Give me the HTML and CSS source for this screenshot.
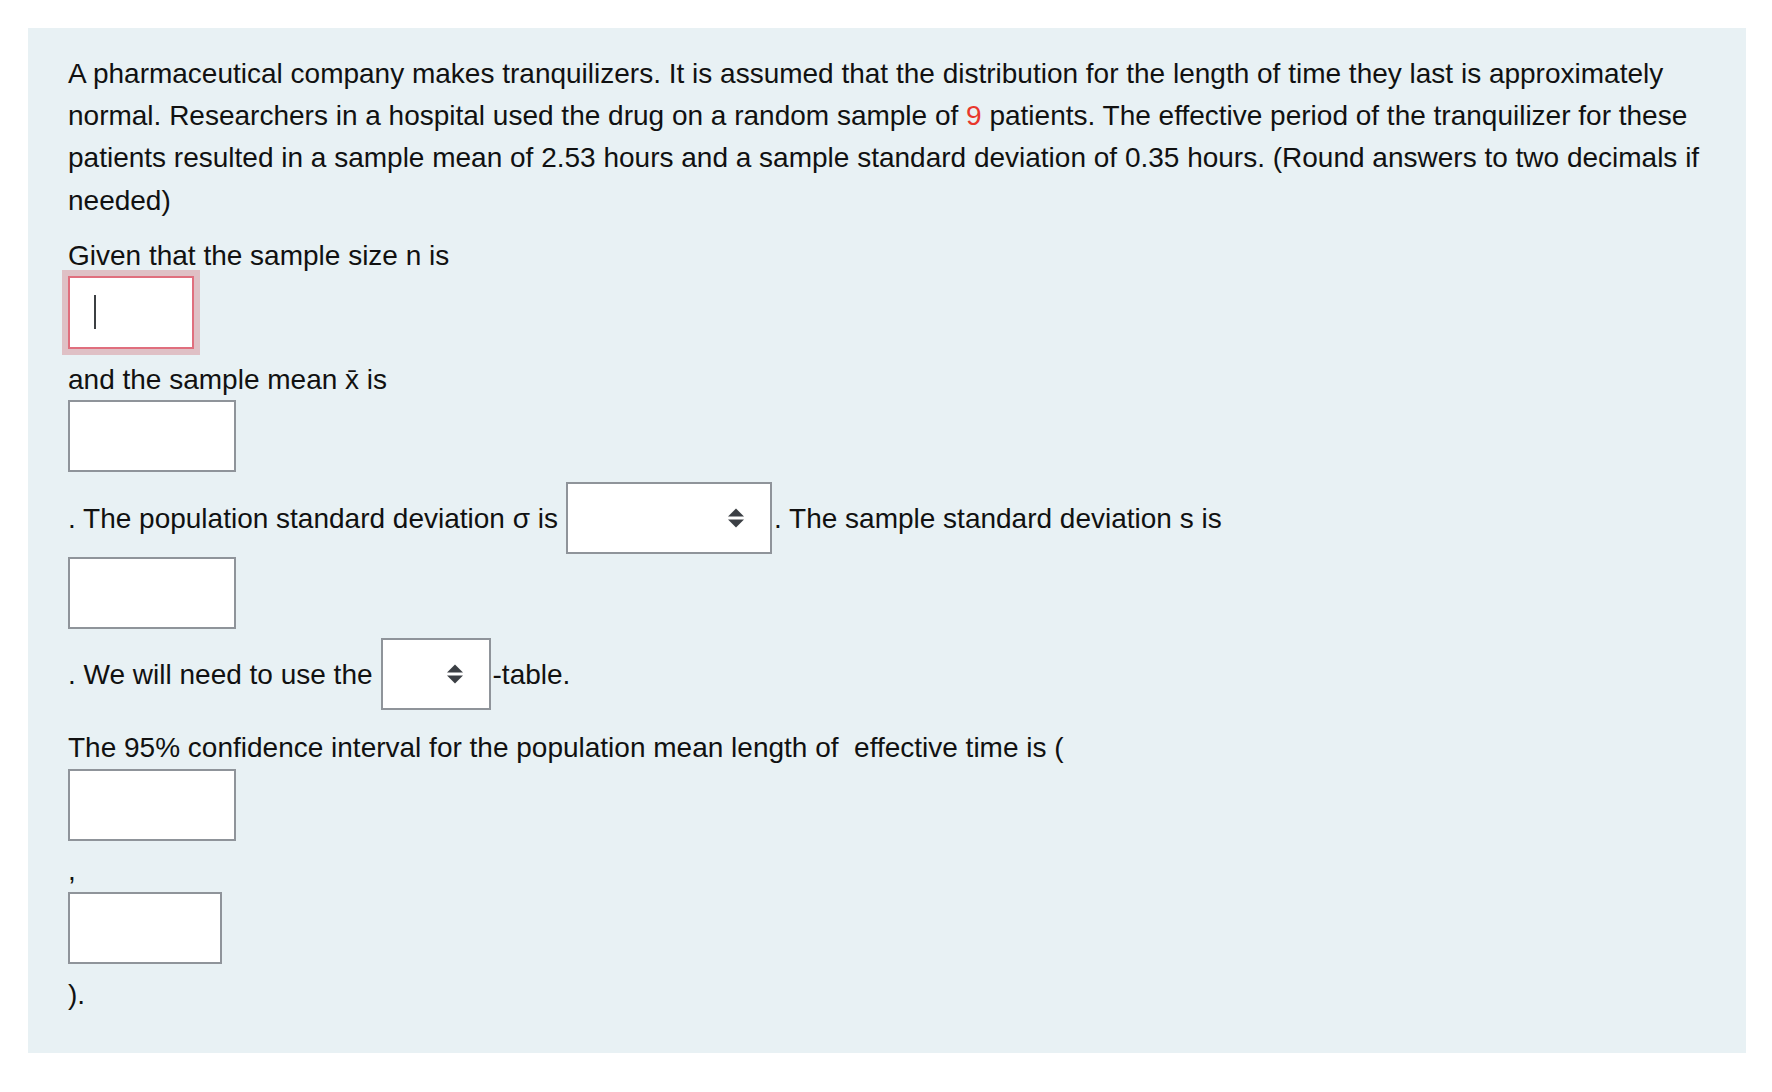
FILE: index.html
```html
<!DOCTYPE html>
<html lang="en">
<head>
<meta charset="utf-8">
<title>Confidence interval question</title>
<link rel="stylesheet" href="styles.css">
</head>
<body>
<div class="panel">
  <p class="intro">A pharmaceutical company makes tranquilizers. It is assumed that the distribution for the length of time they last is approximately normal. Researchers in a hospital used the drug on a random sample of <span class="num">9</span> patients. The effective period of the tranquilizer for these patients resulted in a sample mean of 2.53 hours and a sample standard deviation of 0.35 hours. (Round answers to two decimals if needed)</p>

  <div class="line given">Given that the sample size n is</div>
  <div class="box box-n focused"></div>

  <div class="line after-n">and the sample mean x̄ is</div>
  <div class="box box-wide after-line"></div>

  <div class="row row-sigma">
    <span class="txt">. The population standard deviation σ is</span>
    <div class="select select-sigma">
      <svg class="arrows" width="16" height="20" viewBox="0 0 16 20"><path d="M0 8.5 L8 0.5 L16 8.5 Z M0 11.5 L16 11.5 L8 19.5 Z" fill="#3b3f44"/></svg>
    </div>
    <span class="txt tight">. The sample standard deviation s is</span>
  </div>
  <div class="box box-wide after-row"></div>

  <div class="row row-table">
    <span class="txt">. We will need to use the</span>
    <div class="select select-table">
      <svg class="arrows" width="16" height="20" viewBox="0 0 16 20"><path d="M0 8.5 L8 0.5 L16 8.5 Z M0 11.5 L16 11.5 L8 19.5 Z" fill="#3b3f44"/></svg>
    </div>
    <span class="txt tight">-table.</span>
  </div>

  <div class="line ci">The 95% confidence interval for the population mean length of&nbsp; effective time is (</div>
  <div class="box box-wide after-line2"></div>
  <div class="line comma">,</div>
  <div class="box box-mid after-line2"></div>
  <div class="line closing">).</div>
</div>
</body>
</html>
```

FILE: styles.css
```css
html, body {
  margin: 0;
  padding: 0;
  background: #ffffff;
}

body {
  font-family: "Liberation Sans", Arial, Helvetica, sans-serif;
  font-size: 28px;
  line-height: 42px;
  color: #111111;
}

.panel {
  box-sizing: border-box;
  width: 1718px;
  margin: 28px 0 0 28px;
  padding: 25px 24px 39px 40px;
  background: #e8f1f4;
}

.intro {
  margin: 0;
  line-height: 42.2px;
}

.num {
  color: #e8372c;
}

.line {
  box-sizing: border-box;
  height: 42px;
  padding-top: 2px;
}

.given { margin-top: 11px; }
.after-n { margin-top: 8px; }
.ci { margin-top: 15px; }
.comma { margin-top: 7px; }
.closing { margin-top: 8px; }

.box {
  box-sizing: border-box;
  height: 72px;
  background: #ffffff;
  border: 2px solid #8f949a;
}

.box-n {
  position: relative;
  width: 126px;
  height: 73px;
  margin-top: 1px;
  border-color: #e06e7d;
  box-shadow: 0 0 0 6px #dfc0c5;
}

.box-n::after {
  content: "";
  position: absolute;
  left: 24px;
  top: 17px;
  width: 2px;
  height: 34px;
  background: #3c4043;
}

.box-wide { width: 168px; }
.box-mid { width: 154px; }

.after-line { margin-top: 1px; }
.after-line2 { margin-top: 2px; }
.after-row { margin-top: 3px; }

.row {
  display: flex;
  align-items: center;
  height: 72px;
  white-space: nowrap;
}

.txt {
  padding-top: 3px;
}

.row-sigma { margin-top: 10px; }
.row-table { margin-top: 9px; }

.select {
  box-sizing: border-box;
  display: flex;
  align-items: center;
  justify-content: flex-end;
  height: 72px;
  margin-left: 8px;
  padding-right: 26px;
  background: #ffffff;
  border: 2px solid #8f949a;
}

.select-sigma { width: 206px; }
.select-table { width: 110px; }

.arrows {
  display: block;
}

.tight {
  margin-left: 2px;
}
```
